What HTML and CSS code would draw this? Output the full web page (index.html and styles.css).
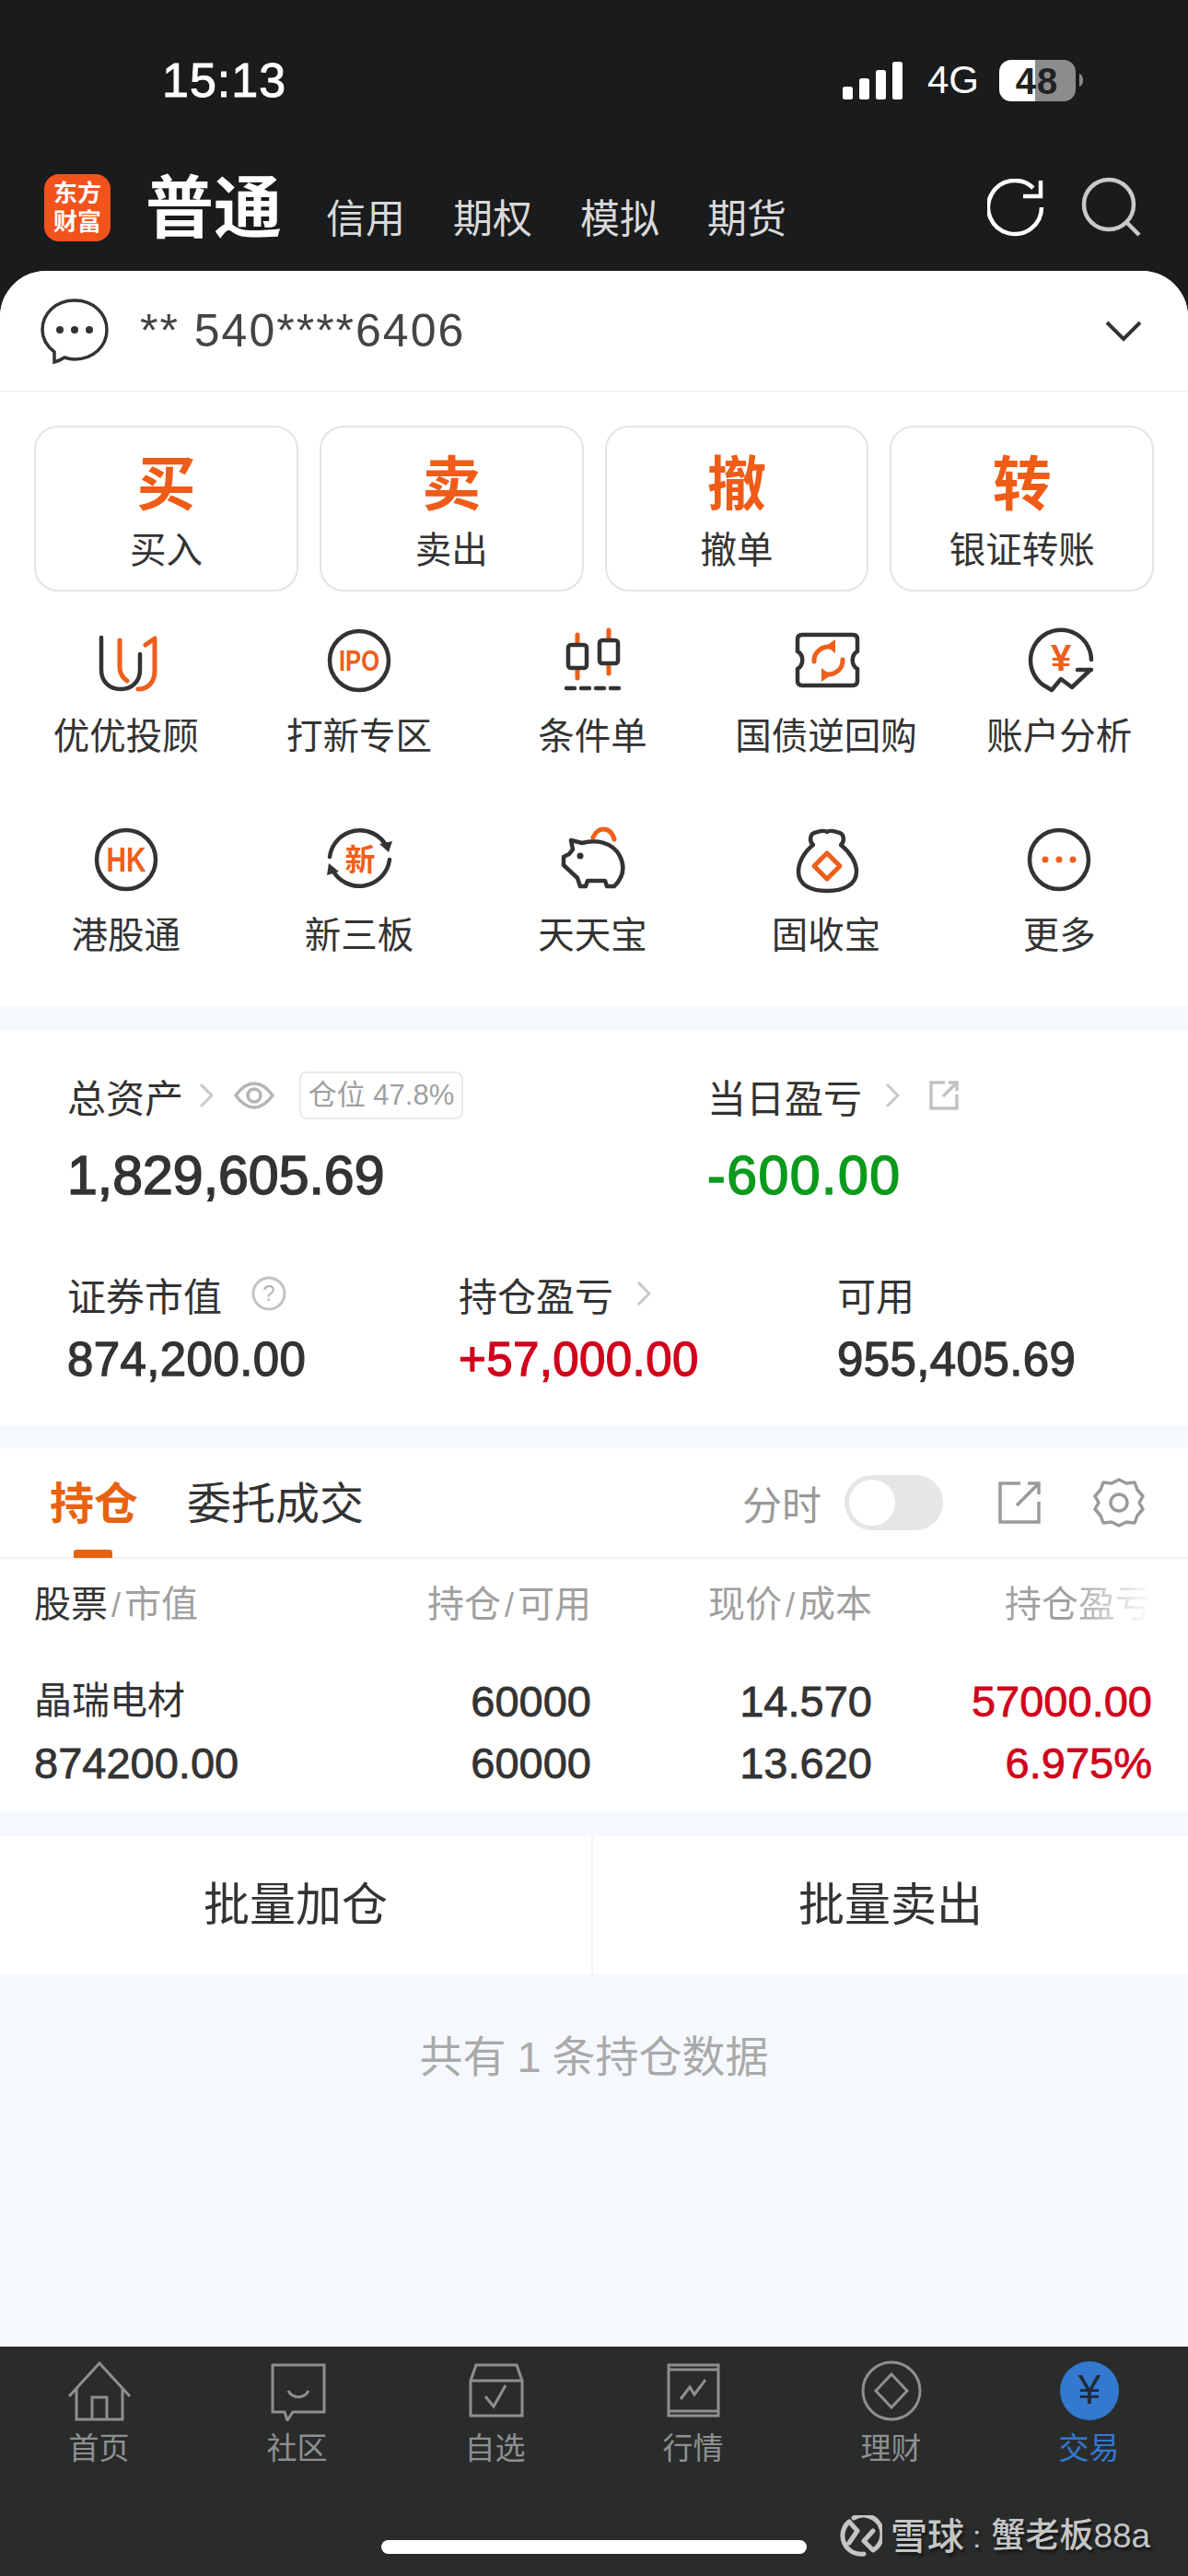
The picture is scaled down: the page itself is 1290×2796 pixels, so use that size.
FILE: index.html
```html
<!DOCTYPE html>
<html lang="zh-CN">
<head>
<meta charset="utf-8">
<title>交易</title>
<link rel="stylesheet" href="styles.css">
</head>
<body>
<div class="app">
  <header class="head">
    <div class="status">
      <span class="clock">15:13</span>
      <div class="status-right">
        <svg class="signal" width="65" height="41" viewBox="0 0 65 41"><rect x="0" y="27" width="11" height="14" rx="2.5"/><rect x="18" y="18" width="11" height="23" rx="2.5"/><rect x="36" y="9" width="11" height="32" rx="2.5"/><rect x="54" y="0" width="11" height="41" rx="2.5"/></svg>
        <span class="net">4G</span>
        <svg class="battery" width="92" height="45" viewBox="0 0 92 45"><defs><linearGradient id="batt"><stop offset="47%" stop-color="#fff"/><stop offset="47%" stop-color="#8c8c8c"/></linearGradient></defs><rect width="83" height="45" rx="13" fill="url(#batt)"/><path d="M87 15c3 1 4 4 4 7s-1 6-4 7z" fill="#8c8c8c"/><text x="41" y="37" text-anchor="middle" class="batt-text">48</text></svg>
      </div>
    </div>
    <nav class="topnav">
      <div class="logo"><span>东方</span><span>财富</span></div>
      <span class="title">普通</span>
      <div class="subtabs"><span>信用</span><span>期权</span><span>模拟</span><span>期货</span></div>
      <div class="nav-icons">
        <svg class="refresh" width="64" height="64" viewBox="0 0 64 64" fill="none" stroke="#fff" stroke-width="4.5"><path d="M59 31A29 29 0 1 1 50 10"/><path d="M58 2V19H39"/></svg>
        <svg width="66" height="66" viewBox="0 0 66 66" fill="none" stroke="#c9c9c9" stroke-width="4.5"><circle cx="30" cy="30" r="27"/><path d="M48 48L63 63"/></svg>
      </div>
    </nav>
  </header>

  <main class="main">
    <section class="account">
      <svg width="74" height="74" viewBox="0 0 74 74" fill="none" stroke="#333" stroke-width="3.5"><path d="M15 71c0-6 0-9 0-11C6 53 2 45 2 36 2 18 17 4 37 4s35 14 35 32-15 32-35 32c-4 0-8-1-11-2-3 2-7 4-11 5z"/><circle cx="21" cy="36" r="4" fill="#333" stroke="none"/><circle cx="37" cy="36" r="4" fill="#333" stroke="none"/><circle cx="53" cy="36" r="4" fill="#333" stroke="none"/></svg>
      <span class="acct-no">** 540****6406</span>
      <svg class="acct-chev" width="40" height="24" viewBox="0 0 40 24" fill="none" stroke="#333" stroke-width="4"><path d="M2 3L20 21L38 3"/></svg>
    </section>

    <section class="trade">
      <div class="actions">
        <div class="action"><b>买</b><span>买入</span></div>
        <div class="action"><b>卖</b><span>卖出</span></div>
        <div class="action"><b>撤</b><span>撤单</span></div>
        <div class="action"><b>转</b><span>银证转账</span></div>
      </div>
      <div class="shortcuts">
        <div class="shortcut">
          <svg class="ico" viewBox="0 0 80 80"><path class="d" d="M13 12V47C13 60 22 68 34 68S55 60 55 47V30"/><path class="o" d="M33 15V44C33 50 35 55 41 59M61 20L71 13V48C71 60 64 68 53 68"/></svg>
          <span>优优投顾</span>
        </div>
        <div class="shortcut">
          <svg class="ico" viewBox="0 0 80 80"><circle class="d" cx="40" cy="37" r="32"/><text class="ot" x="40" y="48" font-size="31" textLength="44" lengthAdjust="spacingAndGlyphs" text-anchor="middle">IPO</text></svg>
          <span>打新专区</span>
        </div>
        <div class="shortcut">
          <svg class="ico" viewBox="0 0 80 80"><path class="o" d="M24 9V56M58 4V51"/><rect class="w" x="14" y="20" width="20" height="25" rx="3"/><rect class="w" x="48" y="15" width="20" height="25" rx="3"/><path class="d" stroke-dasharray="9 7" d="M12 67H72"/></svg>
          <span>条件单</span>
        </div>
        <div class="shortcut">
          <svg class="ico" viewBox="0 0 80 80"><path class="d" d="M14 9H69Q74 9 74 14V27C67 31 67 42 74 46V59Q74 64 69 64H14Q9 64 9 59V46C16 42 16 31 9 27V14Q9 9 14 9Z"/><path class="o" d="M27 38A15 15 0 0 1 47 23M58 36A15 15 0 0 1 38 51"/><path class="ofill" d="M40 21L50 14V29ZM45 53L35 60V45Z"/></svg>
          <span>国债逆回购</span>
        </div>
        <div class="shortcut">
          <svg class="ico" viewBox="0 0 80 80"><path class="d" d="M75 36A33 33 0 1 0 22 63L32 69L42 57L54 66L74 47M60 47H75"/><text class="ot" x="42" y="48" font-size="40" text-anchor="middle">¥</text></svg>
          <span>账户分析</span>
        </div>
        <div class="shortcut">
          <svg class="ico" viewBox="0 0 80 80"><circle class="d" cx="40" cy="37" r="32"/><text class="ot" x="40" y="50" font-size="36" textLength="43" lengthAdjust="spacingAndGlyphs" text-anchor="middle">HK</text></svg>
          <span>港股通</span>
        </div>
        <div class="shortcut">
          <svg class="ico" viewBox="0 0 80 80"><path class="d" d="M8 34A33 33 0 0 1 70 23M73 37A33 33 0 0 1 11 48"/><path class="dfill" d="M72 29L62 20L76 17ZM7 41L18 50L5 54Z"/><text class="ot" x="41" y="49" font-size="33" text-anchor="middle">新</text></svg>
          <span>新三板</span>
        </div>
        <div class="shortcut">
          <svg class="ico" viewBox="0 0 80 80"><path class="d" d="M17 16L29 19C45 15 62 18 70 33C76 45 74 56 64 66H56L54 60H35L33 66H27L24 57L9 43V34L15 31L19 26Z"/><circle cx="27" cy="33" r="3.5" fill="#333"/><path class="o" d="M41 13C44 6 49 4 52 4C58 4 62 8 64 15"/></svg>
          <span>天天宝</span>
        </div>
        <div class="shortcut">
          <svg class="ico" viewBox="0 0 80 80"><path class="d" d="M41 7C45 4 50 7 55 8C60 10 60 18 56 21C66 29 73 40 73 50C73 65 58 71 41 71C24 71 10 65 10 50C10 40 16 29 26 21C22 18 22 10 27 8C32 7 37 4 41 7Z"/><path class="o" d="M41 30L55 44L41 58L27 44Z"/></svg>
          <span>固收宝</span>
        </div>
        <div class="shortcut">
          <svg class="ico" viewBox="0 0 80 80"><circle class="d" cx="40" cy="37" r="32"/><circle class="ofill" cx="25" cy="37" r="3.5"/><circle class="ofill" cx="40" cy="37" r="3.5"/><circle class="ofill" cx="55" cy="37" r="3.5"/></svg>
          <span>更多</span>
        </div>
      </div>
    </section>

    <section class="assets">
      <div class="asset-row top">
        <div class="asset-cell wide">
          <div class="asset-label">总资产
            <svg class="chev tight" width="16" height="28" viewBox="0 0 16 28"><path d="M2 2L14 14L2 26"/></svg>
            <svg class="eye" width="44" height="30" viewBox="0 0 44 30"><path d="M2 15C10 4 16 2 22 2S34 4 42 15C34 26 28 28 22 28S10 26 2 15Z"/><circle cx="22" cy="15" r="7"/></svg>
            <span class="pill">仓位 47.8%</span>
          </div>
          <div class="asset-big">1,829,605.69</div>
        </div>
        <div class="asset-cell">
          <div class="asset-label">当日盈亏
            <svg class="chev" width="16" height="28" viewBox="0 0 16 28"><path d="M2 2L14 14L2 26"/></svg>
            <svg class="share" width="34" height="34" viewBox="0 0 34 34"><path d="M18 3H3V31H31V16M16 18L31 3M22 3H31V12"/></svg>
          </div>
          <div class="asset-big green">-600.00</div>
        </div>
      </div>
      <div class="asset-row bottom">
        <div class="asset-cell c1">
          <div class="asset-label">证券市值
            <svg class="help" width="38" height="38" viewBox="0 0 38 38"><circle cx="19" cy="19" r="17"/><text x="19" y="27" text-anchor="middle">?</text></svg>
          </div>
          <div class="asset-mid">874,200.00</div>
        </div>
        <div class="asset-cell c2">
          <div class="asset-label">持仓盈亏
            <svg class="chev" width="16" height="28" viewBox="0 0 16 28"><path d="M2 2L14 14L2 26"/></svg>
          </div>
          <div class="asset-mid red">+57,000.00</div>
        </div>
        <div class="asset-cell">
          <div class="asset-label">可用</div>
          <div class="asset-mid">955,405.69</div>
        </div>
      </div>
    </section>

    <section class="positions">
      <div class="tabbar">
        <span class="tab active">持仓</span>
        <span class="tab">委托成交</span>
        <div class="tab-tools">
          <span class="tool-label">分时</span>
          <span class="switch"><i></i></span>
          <svg class="tool share" width="46" height="46" viewBox="0 0 46 46"><path d="M24 2H2V44H44V22M20 26L44 2M32 2H44V14"/></svg>
          <svg class="tool gear" width="56" height="54" viewBox="0 0 56 54"><path d="M28 2L36 6L45 5L48 13L54 20L50 27L54 34L48 41L45 49L36 48L28 52L20 48L11 49L8 41L2 34L6 27L2 20L8 13L11 5L20 6Z"/><circle cx="28" cy="27" r="9"/></svg>
        </div>
      </div>
      <div class="grid-row thead">
        <span><em>股票</em><i>/</i>市值</span>
        <span>持仓<i>/</i>可用</span>
        <span>现价<i>/</i>成本</span>
        <span class="fade">持仓盈亏</span>
      </div>
      <div class="grid-row tline"><span class="name">晶瑞电材</span><span>60000</span><span>14.570</span><span class="red">57000.00</span></div>
      <div class="grid-row tline"><span>874200.00</span><span>60000</span><span>13.620</span><span class="red">6.975%</span></div>
    </section>

    <section class="batch">
      <div class="batch-btn">批量加仓</div>
      <div class="batch-btn">批量卖出</div>
    </section>

    <p class="empty">共有<span>1</span>条持仓数据</p>
  </main>

  <footer class="dock">
    <div class="dock-items">
      <div class="dock-item">
        <svg width="70" height="66" viewBox="0 0 70 66"><path d="M2 39L35 3L68 39M10 30V64H60V30M27 64V40H43V64"/></svg>
        <span>首页</span>
      </div>
      <div class="dock-item">
        <svg width="70" height="66" viewBox="0 0 70 66"><path d="M8 5H64V56H30L24 65L21 56H8ZM25 33C30 42 42 42 47 33"/></svg>
        <span>社区</span>
      </div>
      <div class="dock-item">
        <svg width="70" height="66" viewBox="0 0 70 66"><path d="M8 22L14 5H58L64 22V60H8ZM8 22H64M24 39L33 50L46 27"/></svg>
        <span>自选</span>
      </div>
      <div class="dock-item">
        <svg width="70" height="66" viewBox="0 0 70 66"><path d="M8 5H62V60H8ZM8 10H62M8 55H62M21 42L31 29L36 37L48 21"/></svg>
        <span>行情</span>
      </div>
      <div class="dock-item">
        <svg width="70" height="66" viewBox="0 0 70 66"><circle cx="35" cy="33" r="31"/><path d="M35 15L52 33L35 51L18 33Z"/></svg>
        <span>理财</span>
      </div>
      <div class="dock-item current">
        <svg width="70" height="66" viewBox="0 0 70 66"><circle cx="35" cy="33" r="32"/><text x="35" y="47" text-anchor="middle">¥</text></svg>
        <span>交易</span>
      </div>
    </div>
    <div class="homebar"></div>
    <div class="watermark">
      <svg width="46" height="46" viewBox="0 0 46 46" fill="none" stroke="#c4c6c6" stroke-width="5" stroke-linecap="round" stroke-linejoin="round"><path d="M26 42A20 20 0 0 1 10 7L19 17L10 30"/><path d="M15 3A20 20 0 0 1 36 38L26 28L36 17"/></svg>
      <b>雪球</b><i>:</i><span>蟹老板88a</span>
    </div>
  </footer>
</div>
</body>
</html>
```

FILE: styles.css
```css
* { box-sizing: border-box; }
html, body { margin: 0; padding: 0; }
body {
  width: 1290px;
  height: 2796px;
  overflow: hidden;
  background: #1a1b1d;
  font-family: "Liberation Sans", "Noto Sans CJK SC", sans-serif;
  color: #333;
}
.app { display: flex; flex-direction: column; height: 2796px; position: relative; }

/* header */
.head { height: 294px; flex: none; color: #fff; }
.status { height: 174px; display: flex; align-items: center; padding: 0 113px 0 176px; justify-content: space-between; }
.clock { font-size: 52px; letter-spacing: 1px; -webkit-text-stroke: 1px #fff; }
.status-right { display: flex; align-items: center; }
.signal { fill: #fff; }
.net { font-size: 42px; margin: 0 22px 0 27px; }
.batt-text { font: bold 40px "Liberation Sans", sans-serif; fill: #222; letter-spacing: 1px; }
.topnav { display: flex; align-items: flex-start; padding: 15px 50px 0 48px; }
.logo {
  width: 72px; height: 73px; border-radius: 16px; background: #f2531c;
  display: flex; flex-direction: column; align-items: center; justify-content: center;
  font-size: 26px; line-height: 31px; font-weight: 700;
}
.title { font-size: 74px; line-height: 76px; font-weight: 700; margin-left: 38px; }
.subtabs { display: flex; gap: 52px; margin-left: 48px; font-size: 43px; line-height: 50px; color: #d9d9d9; padding-top: 24px; }
.nav-icons { display: flex; gap: 38px; margin-left: auto; align-items: flex-start; padding-top: 3px; }
.refresh { margin-top: 2px; }

/* main */
.main { flex: 1; background: #f5f9fd; border-radius: 50px 50px 0 0; overflow: hidden; }
.account {
  height: 131px; background: #fff; border-bottom: 1px solid #eee;
  display: flex; align-items: center; padding: 0 50px 0 44px;
}
.acct-no { font-size: 50px; color: #444; margin-left: 34px; letter-spacing: 2px; }
.acct-chev { margin-left: auto; }

.trade { background: #fff; height: 667px; padding-top: 37px; }
.actions { display: grid; grid-template-columns: repeat(4, 1fr); gap: 23px; padding: 0 37px; }
.action {
  height: 180px; border: 2px solid #e4e4e4; border-radius: 26px;
  display: flex; flex-direction: column; align-items: center; padding-top: 22px;
}
.action b { font-size: 64px; line-height: 80px; color: #ef5c17; font-weight: 700; }
.action span { font-size: 39.5px; line-height: 50px; margin-top: 6px; color: #333; }

.shortcuts { display: grid; grid-template-columns: repeat(5, 1fr); row-gap: 72px; padding: 38px 13px 0 10px; }
.shortcut { display: flex; flex-direction: column; align-items: center; height: 144px; }
.shortcut span { font-size: 39.5px; line-height: 50px; margin-top: 14px; color: #333; white-space: nowrap; }
.ico { width: 80px; height: 80px; }
.ico .d, .ico .o, .ico .w { fill: none; stroke-width: 4.5; stroke-linecap: round; stroke-linejoin: round; }
.ico .d, .ico .w { stroke: #333; }
.ico .w { fill: #fff; }
.ico .o { stroke: #ee5f1b; stroke-width: 5; }
.ico .ofill { fill: #ee5f1b; }
.ico .dfill { fill: #333; }
.ico .ot { fill: #ee5f1b; font-weight: 700; font-family: "Liberation Sans", "Noto Sans CJK SC", sans-serif; }

/* assets */
.assets { background: #fff; height: 430px; margin-top: 26px; padding: 46px 0 0 73px; }
.asset-row { display: flex; }
.asset-row.bottom { margin-top: 68px; }
.asset-cell.wide { width: 695px; }
.asset-cell.c1 { width: 425px; }
.asset-cell.c2 { width: 411px; }
.asset-label { display: flex; align-items: center; height: 50px; font-size: 42px; color: #333; white-space: nowrap; }
.chev { margin-left: 25px; fill: none; stroke: #c8c8c8; stroke-width: 3; }
.chev.tight { margin-left: 17px; }
.eye { margin-left: 22px; fill: none; stroke: #b5b5b5; stroke-width: 3.5; }
.asset-label .share { margin-left: 31px; fill: none; stroke: #c2c2c2; stroke-width: 3.5; }
.pill {
  margin-left: 27px; height: 52px; width: 178px; border: 2px solid #eaeaea; border-radius: 8px;
  font-size: 31px; line-height: 48px; color: #a0a0a0; text-align: center;
}
.help { margin-left: 32px; fill: none; stroke: #c2c2c2; stroke-width: 3; }
.help text { fill: #b5b5b5; stroke: none; font-size: 24px; }
.asset-big { font-size: 59px; line-height: 70px; margin-top: 27px; color: #333; -webkit-text-stroke: 1.6px currentColor; }
.asset-mid { font-size: 51px; line-height: 60px; margin-top: 17px; color: #333; letter-spacing: .4px; -webkit-text-stroke: 1.3px currentColor; }
.green { color: #0c9a1d; letter-spacing: 1.5px; }
.red { color: #d0021b; }

/* positions */
.positions { background: #fff; height: 394px; margin-top: 24px; }
.tabbar { height: 120px; border-bottom: 2px solid #f2f2f2; display: flex; align-items: center; padding: 0 47px 0 54px; }
.tab { font-size: 48px; line-height: 60px; padding-top: 4px; color: #333; margin-right: 53px; position: relative; }
.tab.active { color: #e8620f; font-weight: 700; }
.tab.active::after {
  content: ""; position: absolute; left: 26px; bottom: -28px; width: 42px; height: 9px;
  background: #e8620f; border-radius: 3px 3px 0 0;
}
.tab-tools { margin-left: auto; display: flex; align-items: center; }
.tool-label { font-size: 43px; color: #999; margin-right: 25px; }
.switch { width: 107px; height: 60px; border-radius: 30px; background: #e6e6e6; padding: 5px; display: block; }
.switch i { display: block; width: 50px; height: 50px; border-radius: 50%; background: #fff; }
.tool { fill: none; stroke: #9a9a9a; stroke-width: 3.5; }
.tool.share { margin-left: 60px; }
.tool.gear { margin-left: 57px; stroke-linejoin: round; }

.grid-row { display: grid; grid-template-columns: 250px 355px 305px 304px; padding-left: 37px; text-align: right; }
.grid-row span:first-child { text-align: left; }
.thead { height: 98px; padding-bottom: 6px; align-items: center; font-size: 40px; color: #a0a0a0; margin-bottom: 23px; white-space: nowrap; }
.thead em { font-style: normal; color: #333; }
.thead i { font-style: normal; margin: 0 4px; font-size: 36px; }
.fade { background: linear-gradient(90deg, #a0a0a0 70%, #fff 100%); -webkit-background-clip: text; background-clip: text; color: transparent; }
.tline { height: 67px; line-height: 67px; font-size: 47px; color: #333; -webkit-text-stroke: .8px currentColor; }
.tline .name { font-size: 41px; -webkit-text-stroke: 0; }
.tline .red { color: #d0021b; }

/* batch */
.batch { background: #fff; height: 150px; margin-top: 27px; display: grid; grid-template-columns: 644px 1fr; }
.batch-btn { font-size: 50px; line-height: 150px; text-align: center; color: #333; }
.batch-btn:first-child { border-right: 2px solid #f3f3f3; }
.empty { margin: 60px 0 0; text-align: center; font-size: 47px; line-height: 60px; color: #aaa; }
.empty span { margin: 0 12px; }

/* dock */
.dock { height: 249px; flex: none; background: #2a2c2c; padding-top: 15px; }
.dock-items { display: grid; grid-template-columns: repeat(6, 1fr); }
.dock-item { display: flex; flex-direction: column; align-items: center; color: #8e9090; }
.dock-item svg { fill: none; stroke: #8e9090; stroke-width: 3; }
.dock-item span { font-size: 33px; line-height: 40px; margin-top: 10px; }
.dock-item.current { color: #3279cf; }
.dock-item.current svg { fill: #3279cf; stroke: none; }
.dock-item.current text { fill: #1f2a36; font-size: 44px; }
.homebar { width: 462px; height: 15px; border-radius: 8px; background: #fff; margin: 79px auto 0; }
.watermark {
  position: absolute; left: 912px; top: 2730px; display: flex; align-items: center;
  color: #c4c6c6; line-height: 46px; text-shadow: 2px 3px 3px #141414; white-space: nowrap;
}
.watermark b { font-size: 40px; font-weight: 500; margin-left: 9px; }
.watermark i { font-style: normal; font-size: 34px; margin: 0 11px 0 9px; }
.watermark span { font-size: 37px; font-weight: 500; }
```
